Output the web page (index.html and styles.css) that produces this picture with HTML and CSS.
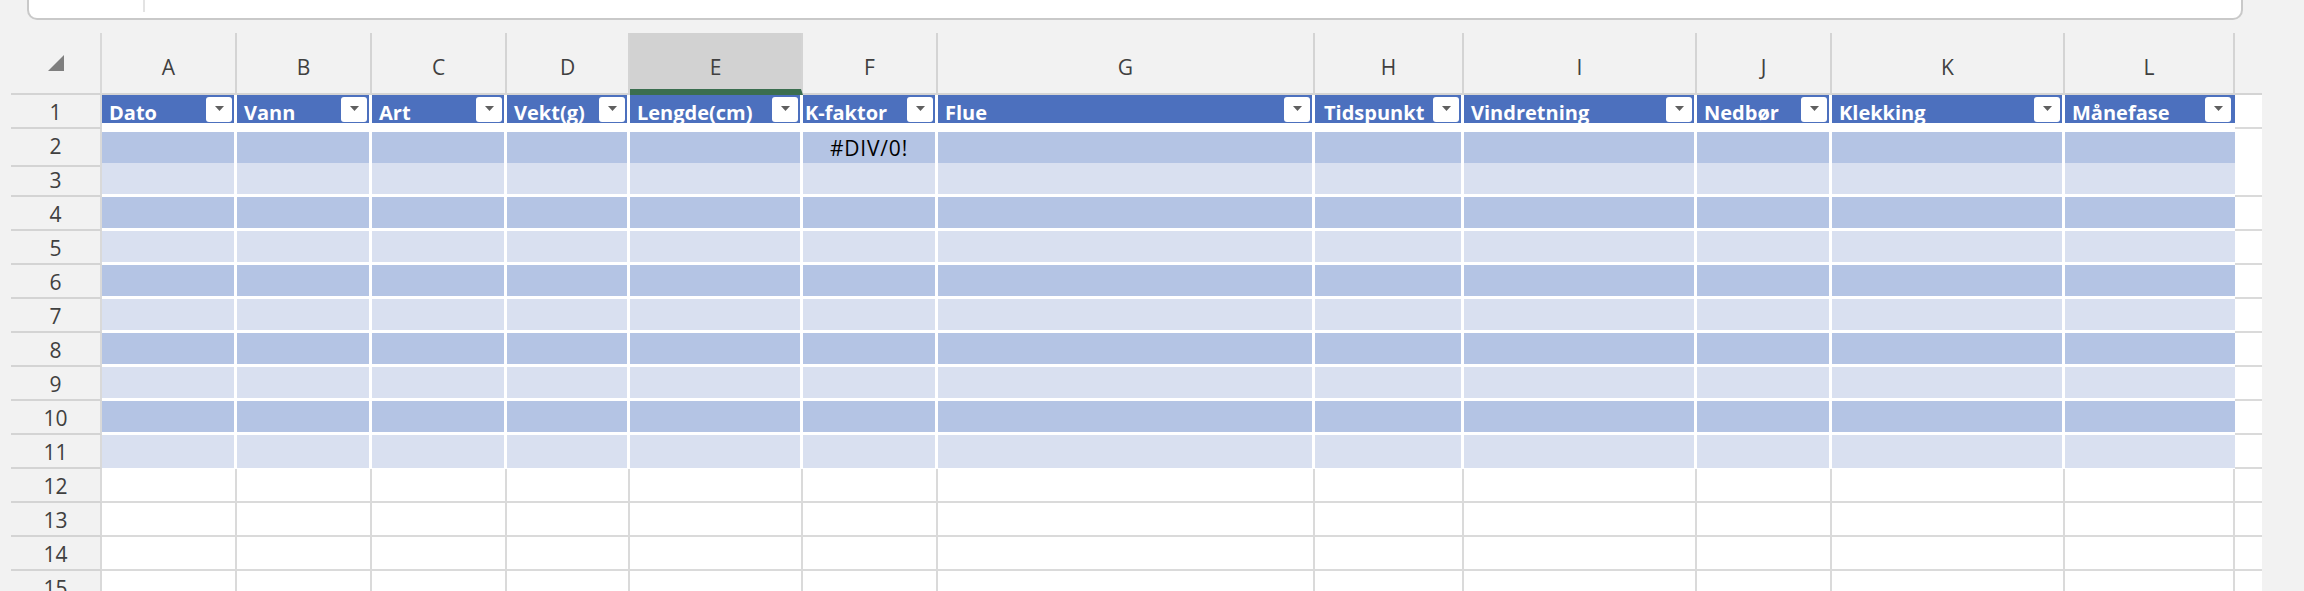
FILE: index.html
```html
<!DOCTYPE html>
<html lang="no">
<head>
<meta charset="utf-8">
<title>Fangstlogg</title>
<link rel="stylesheet" href="styles.css">
</head>
<body>
<div class="formula"><div class="namebox"></div></div>
<div class="sheet">
  <div class="row colhead">
    <div class="corner"><svg width="16" height="16" viewBox="0 0 16 16"><path d="M16 0 V16 H0 Z" fill="#7f7f7f"/></svg></div>
    <div>A</div><div>B</div><div>C</div><div>D</div><div class="sel">E</div><div>F</div><div>G</div><div>H</div><div>I</div><div>J</div><div>K</div><div>L</div><div class="blank"></div>
  </div>
  <div class="row r1">
    <div class="rh">1</div>
    <div class="th"><span class="tt">Dato</span><span class="dd"><svg width="9" height="5" viewBox="0 0 9 5"><path d="M0 0 H9 L4.5 5 Z" fill="#5f5f5f"/></svg></span></div>
    <div class="th"><span class="tt">Vann</span><span class="dd"><svg width="9" height="5" viewBox="0 0 9 5"><path d="M0 0 H9 L4.5 5 Z" fill="#5f5f5f"/></svg></span></div>
    <div class="th"><span class="tt">Art</span><span class="dd"><svg width="9" height="5" viewBox="0 0 9 5"><path d="M0 0 H9 L4.5 5 Z" fill="#5f5f5f"/></svg></span></div>
    <div class="th"><span class="tt">Vekt(g)</span><span class="dd"><svg width="9" height="5" viewBox="0 0 9 5"><path d="M0 0 H9 L4.5 5 Z" fill="#5f5f5f"/></svg></span></div>
    <div class="th"><span class="tt">Lengde(cm)</span><span class="dd"><svg width="9" height="5" viewBox="0 0 9 5"><path d="M0 0 H9 L4.5 5 Z" fill="#5f5f5f"/></svg></span></div>
    <div class="th tight"><span class="tt">K-faktor</span><span class="dd"><svg width="9" height="5" viewBox="0 0 9 5"><path d="M0 0 H9 L4.5 5 Z" fill="#5f5f5f"/></svg></span></div>
    <div class="th"><span class="tt">Flue</span><span class="dd"><svg width="9" height="5" viewBox="0 0 9 5"><path d="M0 0 H9 L4.5 5 Z" fill="#5f5f5f"/></svg></span></div>
    <div class="th wide"><span class="tt">Tidspunkt</span><span class="dd"><svg width="9" height="5" viewBox="0 0 9 5"><path d="M0 0 H9 L4.5 5 Z" fill="#5f5f5f"/></svg></span></div>
    <div class="th"><span class="tt">Vindretning</span><span class="dd"><svg width="9" height="5" viewBox="0 0 9 5"><path d="M0 0 H9 L4.5 5 Z" fill="#5f5f5f"/></svg></span></div>
    <div class="th"><span class="tt">Nedbør</span><span class="dd"><svg width="9" height="5" viewBox="0 0 9 5"><path d="M0 0 H9 L4.5 5 Z" fill="#5f5f5f"/></svg></span></div>
    <div class="th"><span class="tt">Klekking</span><span class="dd"><svg width="9" height="5" viewBox="0 0 9 5"><path d="M0 0 H9 L4.5 5 Z" fill="#5f5f5f"/></svg></span></div>
    <div class="th end"><span class="tt">Månefase</span><span class="dd"><svg width="9" height="5" viewBox="0 0 9 5"><path d="M0 0 H9 L4.5 5 Z" fill="#5f5f5f"/></svg></span></div>
    <div class="x"></div>
  </div>
  <div class="row bd r2">
    <div class="rh">2</div>
    <div class="c"></div><div class="c"></div><div class="c"></div><div class="c"></div><div class="c"></div><div class="c ctr">#DIV/0!</div><div class="c"></div><div class="c"></div><div class="c"></div><div class="c"></div><div class="c"></div><div class="c end"></div><div class="x"></div>
  </div>
  <div class="row bl">
    <div class="rh">3</div>
    <div class="c"></div><div class="c"></div><div class="c"></div><div class="c"></div><div class="c"></div><div class="c"></div><div class="c"></div><div class="c"></div><div class="c"></div><div class="c"></div><div class="c"></div><div class="c end"></div><div class="x"></div>
  </div>
  <div class="row bd">
    <div class="rh">4</div>
    <div class="c"></div><div class="c"></div><div class="c"></div><div class="c"></div><div class="c"></div><div class="c"></div><div class="c"></div><div class="c"></div><div class="c"></div><div class="c"></div><div class="c"></div><div class="c end"></div><div class="x"></div>
  </div>
  <div class="row bl">
    <div class="rh">5</div>
    <div class="c"></div><div class="c"></div><div class="c"></div><div class="c"></div><div class="c"></div><div class="c"></div><div class="c"></div><div class="c"></div><div class="c"></div><div class="c"></div><div class="c"></div><div class="c end"></div><div class="x"></div>
  </div>
  <div class="row bd">
    <div class="rh">6</div>
    <div class="c"></div><div class="c"></div><div class="c"></div><div class="c"></div><div class="c"></div><div class="c"></div><div class="c"></div><div class="c"></div><div class="c"></div><div class="c"></div><div class="c"></div><div class="c end"></div><div class="x"></div>
  </div>
  <div class="row bl">
    <div class="rh">7</div>
    <div class="c"></div><div class="c"></div><div class="c"></div><div class="c"></div><div class="c"></div><div class="c"></div><div class="c"></div><div class="c"></div><div class="c"></div><div class="c"></div><div class="c"></div><div class="c end"></div><div class="x"></div>
  </div>
  <div class="row bd">
    <div class="rh">8</div>
    <div class="c"></div><div class="c"></div><div class="c"></div><div class="c"></div><div class="c"></div><div class="c"></div><div class="c"></div><div class="c"></div><div class="c"></div><div class="c"></div><div class="c"></div><div class="c end"></div><div class="x"></div>
  </div>
  <div class="row bl">
    <div class="rh">9</div>
    <div class="c"></div><div class="c"></div><div class="c"></div><div class="c"></div><div class="c"></div><div class="c"></div><div class="c"></div><div class="c"></div><div class="c"></div><div class="c"></div><div class="c"></div><div class="c end"></div><div class="x"></div>
  </div>
  <div class="row bd">
    <div class="rh">10</div>
    <div class="c"></div><div class="c"></div><div class="c"></div><div class="c"></div><div class="c"></div><div class="c"></div><div class="c"></div><div class="c"></div><div class="c"></div><div class="c"></div><div class="c"></div><div class="c end"></div><div class="x"></div>
  </div>
  <div class="row bl r11">
    <div class="rh">11</div>
    <div class="c"></div><div class="c"></div><div class="c"></div><div class="c"></div><div class="c"></div><div class="c"></div><div class="c"></div><div class="c"></div><div class="c"></div><div class="c"></div><div class="c"></div><div class="c end"></div><div class="x"></div>
  </div>
  <div class="row pl">
    <div class="rh">12</div>
    <div class="c"></div><div class="c"></div><div class="c"></div><div class="c"></div><div class="c"></div><div class="c"></div><div class="c"></div><div class="c"></div><div class="c"></div><div class="c"></div><div class="c"></div><div class="c"></div><div class="x"></div>
  </div>
  <div class="row pl">
    <div class="rh">13</div>
    <div class="c"></div><div class="c"></div><div class="c"></div><div class="c"></div><div class="c"></div><div class="c"></div><div class="c"></div><div class="c"></div><div class="c"></div><div class="c"></div><div class="c"></div><div class="c"></div><div class="x"></div>
  </div>
  <div class="row pl">
    <div class="rh">14</div>
    <div class="c"></div><div class="c"></div><div class="c"></div><div class="c"></div><div class="c"></div><div class="c"></div><div class="c"></div><div class="c"></div><div class="c"></div><div class="c"></div><div class="c"></div><div class="c"></div><div class="x"></div>
  </div>
  <div class="row pl">
    <div class="rh">15</div>
    <div class="c"></div><div class="c"></div><div class="c"></div><div class="c"></div><div class="c"></div><div class="c"></div><div class="c"></div><div class="c"></div><div class="c"></div><div class="c"></div><div class="c"></div><div class="c"></div><div class="x"></div>
  </div>
</div>
</body>
</html>
```

FILE: styles.css
```css
* { box-sizing: border-box; margin: 0; padding: 0; }
html, body { width: 2304px; height: 591px; overflow: hidden; background: #f2f2f2; }
body { font-family: "Open Sans", "Noto Sans", sans-serif; color: #404040; }

.formula {
  margin: 0 61px 0 27px;
  height: 20px;
  background: #fff;
  border: 2px solid #c9c9c9;
  border-top: 0;
  border-radius: 0 0 10px 10px;
  display: flex;
}
.namebox { width: 116px; height: 12px; border-right: 2px solid #e3e3e3; }

.sheet { margin: 13px 0 0 11px; }

.row {
  display: grid;
  grid-template-columns: 91px 135px 135px 135px 123px 173px 135px 377px 149px 233px 135px 233px 170px 27px;
  height: 34px;
}

/* column header row */
.colhead { height: 62px; }
.colhead > div {
  border-bottom: 2px solid #d4d4d4;
  border-right: 2px solid #d4d4d4;
  text-align: center;
  font-size: 21px;
  color: #404040;
  padding-top: 8px;
  line-height: 52px;
}
.colhead > .corner {
  display: flex;
  align-items: center;
  justify-content: center;
  padding: 0;
  border-right-color: #d9d9d9;
}
.colhead > .sel {
  background: #d2d2d2;
  border-bottom: 6px solid #3b6e4f;
  padding-top: 12px;
  line-height: 44px;
}
.colhead > .blank { border-right: 0; }

/* row headers */
.rh {
  border-right: 2px solid #d9d9d9;
  border-bottom: 2px solid #d4d4d4;
  text-align: center;
  font-size: 21px;
  color: #404040;
  padding-top: 3px;
  line-height: 29px;
}

/* table header row */
.th {
  background: #4c70be;
  border-right: 3px solid #fff;
  border-bottom: 6px solid #fff;
  display: flex;
  align-items: flex-start;
  padding: 0 2px 0 7px;
  overflow: hidden;
}
.th.tight { padding-left: 2px; }
.th.wide { padding-left: 9px; }
.th.end { border-right: 0; padding-right: 4px; }
.tt {
  color: #fff;
  font-weight: 700;
  font-size: 20px;
  line-height: 27px;
  margin-top: 4px;
  white-space: nowrap;
}
.dd {
  margin-left: auto;
  margin-top: 2px;
  flex: none;
  width: 26px;
  height: 25px;
  background: #fff;
  border-radius: 3px;
  display: flex;
  align-items: center;
  justify-content: center;
  padding-bottom: 2px;
}
.dd svg { display: block; }

/* body cells */
.c { border-right: 3px solid #fff; border-bottom: 3px solid #fff; }
.c.end { border-right: 0; }
.bd .c { background: #b4c4e4; }
.bl .c { background: #d9e0f0; }
.r2 .c { border-top: 3px solid #fff; }
.r11 .c { border-bottom-width: 1px; }
.pl .c { background: #fff; border-right: 2px solid #dadada; border-bottom: 2px solid #dadada; }
.x { background: #fff; border-bottom: 2px solid #dadada; }

.ctr {
  text-align: center;
  font-size: 21px;
  letter-spacing: 0.8px;
  line-height: 32px;
  color: #000;
}
```
